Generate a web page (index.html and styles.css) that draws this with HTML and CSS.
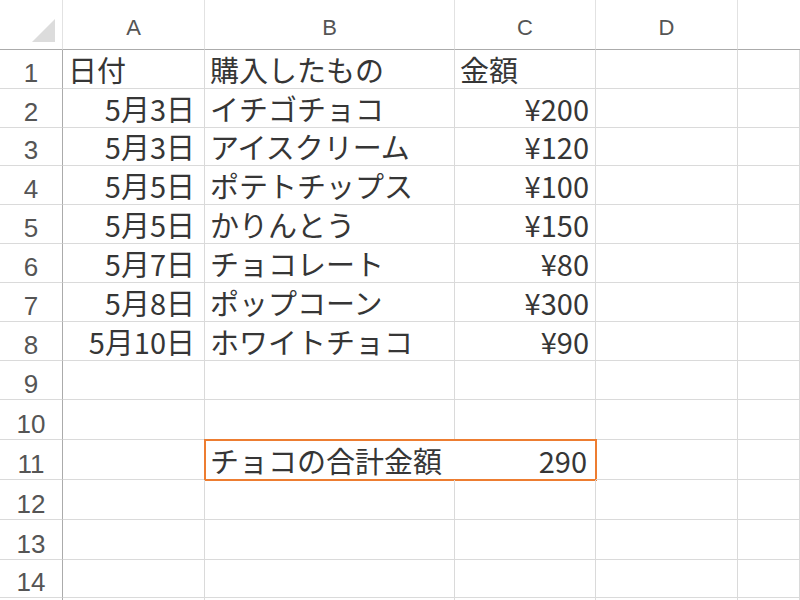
FILE: index.html
```html
<!DOCTYPE html>
<html lang="ja">
<head>
<meta charset="utf-8">
<title>Sheet</title>
<link rel="stylesheet" href="styles.css">
</head>
<body>
<div class="sheet">
  <div class="corner"><svg width="24" height="24" viewBox="0 0 24 24"><polygon points="23,0 23,23 0,23" fill="#dcdcdc"/></svg></div>
  <div class="colhead">A</div>
  <div class="colhead">B</div>
  <div class="colhead">C</div>
  <div class="colhead">D</div>
  <div class="colhead last"></div>

  <div class="rowhead">1</div>
  <div class="cell">日付</div>
  <div class="cell">購入したもの</div>
  <div class="cell">金額</div>
  <div class="cell"></div>
  <div class="cell"></div>

  <div class="rowhead">2</div>
  <div class="cell num">5月3日</div>
  <div class="cell">イチゴチョコ</div>
  <div class="cell num amt">¥200</div>
  <div class="cell"></div>
  <div class="cell"></div>

  <div class="rowhead">3</div>
  <div class="cell num">5月3日</div>
  <div class="cell">アイスクリーム</div>
  <div class="cell num amt">¥120</div>
  <div class="cell"></div>
  <div class="cell"></div>

  <div class="rowhead">4</div>
  <div class="cell num">5月5日</div>
  <div class="cell">ポテトチップス</div>
  <div class="cell num amt">¥100</div>
  <div class="cell"></div>
  <div class="cell"></div>

  <div class="rowhead">5</div>
  <div class="cell num">5月5日</div>
  <div class="cell">かりんとう</div>
  <div class="cell num amt">¥150</div>
  <div class="cell"></div>
  <div class="cell"></div>

  <div class="rowhead">6</div>
  <div class="cell num">5月7日</div>
  <div class="cell">チョコレート</div>
  <div class="cell num amt">¥80</div>
  <div class="cell"></div>
  <div class="cell"></div>

  <div class="rowhead">7</div>
  <div class="cell num">5月8日</div>
  <div class="cell">ポップコーン</div>
  <div class="cell num amt">¥300</div>
  <div class="cell"></div>
  <div class="cell"></div>

  <div class="rowhead">8</div>
  <div class="cell num">5月10日</div>
  <div class="cell">ホワイトチョコ</div>
  <div class="cell num amt">¥90</div>
  <div class="cell"></div>
  <div class="cell"></div>

  <div class="rowhead">9</div>
  <div class="cell"></div>
  <div class="cell"></div>
  <div class="cell"></div>
  <div class="cell"></div>
  <div class="cell"></div>

  <div class="rowhead">10</div>
  <div class="cell"></div>
  <div class="cell"></div>
  <div class="cell"></div>
  <div class="cell"></div>
  <div class="cell"></div>

  <div class="rowhead">11</div>
  <div class="cell"></div>
  <div class="cell merged"><span>チョコの合計金額</span><span class="total">290</span></div>
  <div class="cell"></div>
  <div class="cell"></div>

  <div class="rowhead">12</div>
  <div class="cell"></div>
  <div class="cell"></div>
  <div class="cell"></div>
  <div class="cell"></div>
  <div class="cell"></div>

  <div class="rowhead">13</div>
  <div class="cell"></div>
  <div class="cell"></div>
  <div class="cell"></div>
  <div class="cell"></div>
  <div class="cell"></div>

  <div class="rowhead">14</div>
  <div class="cell"></div>
  <div class="cell"></div>
  <div class="cell"></div>
  <div class="cell"></div>
  <div class="cell"></div>

  <div class="rowhead tail"></div>
  <div class="cell tail"></div>
  <div class="cell tail"></div>
  <div class="cell tail"></div>
  <div class="cell tail"></div>
  <div class="cell tail"></div>
</div>
</body>
</html>
```

FILE: styles.css
```css
html, body {
  margin: 0;
  padding: 0;
  background: #ffffff;
  overflow: hidden;
}

.sheet {
  display: grid;
  grid-template-columns: 63px 142px 250px 141px 142px 1fr;
  grid-template-rows: 50px 39px 39px 38px 39px 39px 39px 39px 39px 39px 40px 40px 40px 40px 38px 2px;
  width: 800px;
  height: 600px;
  overflow: hidden;
  font-family: "Noto Sans CJK JP", sans-serif;
  font-size: 29px;
  color: #363636;
}

.sheet > div {
  box-sizing: border-box;
}

.corner {
  border-right: 1px solid #e2e2e2;
  border-bottom: 1px solid #ababab;
  display: flex;
  justify-content: flex-end;
  align-items: flex-end;
  padding: 0 6px 6px 0;
}

.corner svg {
  display: block;
}

.colhead {
  border-right: 1px solid #e2e2e2;
  border-bottom: 1px solid #ababab;
  font-family: "Liberation Sans", Arial, sans-serif;
  font-size: 22px;
  color: #555555;
  display: flex;
  justify-content: center;
  align-items: center;
  padding-top: 6px;
}

.colhead.last {
  border-right: none;
}

.rowhead {
  border-right: 1px solid #ababab;
  border-bottom: 1px solid #dadada;
  font-family: "Liberation Sans", Arial, sans-serif;
  font-size: 26px;
  line-height: 29px;
  color: #555555;
  display: flex;
  justify-content: center;
  align-items: flex-end;
  padding-bottom: 0;
}

.cell {
  border-right: 1px solid #dadada;
  border-bottom: 1px solid #dadada;
  line-height: 29px;
  display: flex;
  align-items: flex-end;
  padding: 0 6px 4px 5px;
  white-space: nowrap;
}

.tail {
  border-bottom: none;
}

.cell.num {
  justify-content: flex-end;
  padding-right: 9px;
}

.cell.amt {
  padding-right: 6px;
}

.cell.merged {
  grid-column: span 2;
  justify-content: space-between;
  outline: 2px solid #ed7d31;
  outline-offset: -1px;
  padding-right: 8px;
}
```
